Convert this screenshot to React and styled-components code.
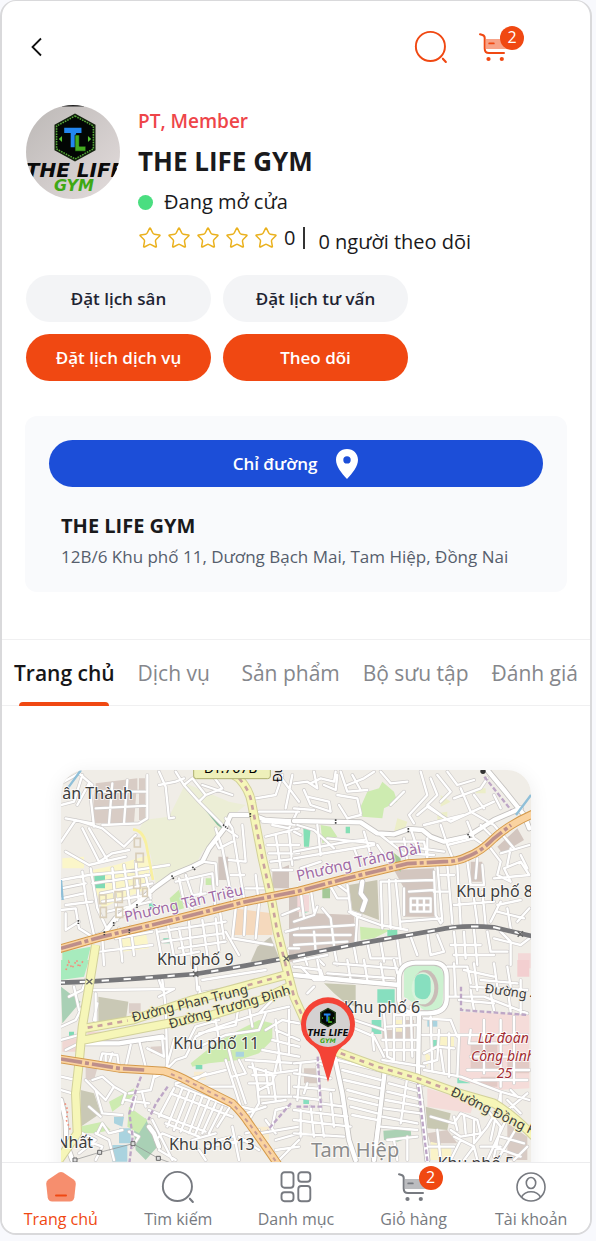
import { useState } from "react";
import { Star } from "lucide-react";
import styled, { createGlobalStyle } from "styled-components";

const TABS = ["Trang chủ", "Dịch vụ", "Sản phẩm", "Bộ sưu tập", "Đánh giá"];

const orange = "#f04812";
const grey = "#777a80";

/* ---------- icons ---------- */

const SearchIcon = () => (
  <svg width="36" height="36" viewBox="0 0 24 24" fill="none" stroke="currentColor" strokeLinecap="round">
    <circle cx="11.6" cy="11.6" r="9.7" strokeWidth="1.3" />
    <path d="M19.9 19.8l2 2.2" strokeWidth="1.4" />
  </svg>
);

const CartIcon = () => (
  <svg width="36" height="36" viewBox="0 0 36 36" fill="none" stroke="currentColor" strokeLinecap="round">
    <path d="M9 10h21v10H9z" fill="currentColor" fillOpacity="0.5" stroke="none" />
    <path
      d="M3 5.2l2.5 .8Q7.700 6.700 7.700 9v10.500Q7.700 24 12 24h15"
      strokeWidth="2"
      strokeLinejoin="round"
    />
    <path d="M12.200 14.400h4.600" strokeWidth="1.800" />
    <circle cx="11.500" cy="30" r="2.100" fill="currentColor" stroke="none" />
    <circle cx="24.800" cy="30" r="2.100" fill="currentColor" stroke="none" />
  </svg>
);

const HomeIcon = () => (
  <svg width="36" height="36" viewBox="0 0 36 36">
    <path
      d="M15.800 3.600Q18 2.300 20.200 3.600L30.600 10.400Q33 12 32.800 14.800L31.300 28.500Q30.600 32.500 26.800 32.500H9.200Q5.400 32.500 4.700 28.500L3.200 14.800Q3 12 5.400 10.400Z"
      fill="#f68e6e"
    />
    <path d="M13 26.500h10" stroke={orange} strokeWidth="2" strokeLinecap="round" />
  </svg>
);

const GridIcon = () => (
  <svg width="36" height="36" viewBox="0 0 36 36" fill="none" stroke="currentColor" strokeWidth="1.900">
    <rect x="3.500" y="3.300" width="12" height="15.500" rx="3" />
    <rect x="20.300" y="3.300" width="12" height="9.500" rx="3" />
    <rect x="3.500" y="23.300" width="12" height="9" rx="3" />
    <rect x="20.300" y="17" width="12" height="15.300" rx="3" />
  </svg>
);

const UserIcon = () => (
  <svg width="36" height="36" viewBox="0 0 36 36" fill="none" stroke="currentColor" strokeWidth="1.600">
    <circle cx="18" cy="18" r="14" />
    <ellipse cx="18" cy="14" rx="4.700" ry="5.500" />
    <path d="M8.500 28Q11.500 22.700 18 22.700T27.500 28" />
  </svg>
);

const PinIcon = () => (
  <svg width="24" height="32" viewBox="0 0 24 32">
    <path
      d="M12 1C5.600 1 1 5.600 1 11.700C1 18.500 6.500 25 12 31C17.500 25 23 18.500 23 11.700C23 5.600 18.400 1 12 1ZM12 8.200a3.700 3.700 0 1 1 0 7.400a3.700 3.700 0 0 1 0-7.400Z"
      fill="#fff"
      fillRule="evenodd"
    />
  </svg>
);

const Emblem = () => (
  <g>
    <path d="M0-24L19-13V12L0 23L-19 12V-13Z" fill="#14220f" />
    <path d="M0-21.500L17-11.700V10.700L0 20.500L-17 10.700V-11.700Z" fill="#020604" stroke="#58ad39" strokeWidth="1.400" strokeDasharray="1.500 1" />
    <path d="M-10-10H6V-5H1V9H-4V-5H-10Z" fill="#2387f0" />
    <path d="M0-3H4V8H10V13H0Z" fill="#43ad20" stroke="#020604" strokeWidth=".6" />
    <path d="M-15 1L-12-2V4ZM15 1L12-2V4Z" fill="#58c535" />
  </g>
);

const GymLogo = () => (
  <LogoSvg viewBox="0 0 94 94" role="img" aria-label="THE LIFE GYM">
    <defs>
      <linearGradient id="wall" x1="0" y1="0" x2="1" y2="1">
        <stop offset="0" stopColor="#bcb8b6" />
        <stop offset="1" stopColor="#e3dcdc" />
      </linearGradient>
    </defs>
    <rect width="94" height="94" fill="url(#wall)" />
    <path d="M36 0h22v1.500H36z" fill="#222" />
    <g transform="translate(49 33) scale(1.080 1.020)">
      <Emblem />
    </g>
    <LogoText x="49" y="72" fontSize="20" fill="#0a0a0a">
      THE LIFE
    </LogoText>
    <LogoText x="48" y="86" fontSize="16" fill="#3fa814">
      GYM
    </LogoText>
  </LogoSvg>
);

/* ---------- map ---------- */

// Four tiles, each with its own origin: building blocks, then streets.
const TILES = [
  {
    x: -6,
    y: -15,
    areas: [
      ["#eceed6", "M255 165L330 155L380 55L510 110L560 120L530 145L500 190L430 260L405 310L345 325L290 355L275 270L240 195Z"],
      ["#d8ccc5", "M110 55L235 40V75H110ZM105 85L232 80L225 175H100ZM240 40H258V165H240Z"],
      ["#fbf6c9", "M10 280L75 275V310H10ZM100 315L170 300L270 270V370L170 410L130 430L100 350ZM180 510L260 500L270 550L190 560Z"],
      ["#7fdab5", "M106 333L138 330V370H106ZM313 520H333V535H313ZM270 415H285V435H270Z"],
      ["#c9e9ac", "M332 400L360 374L375 430L340 440ZM440 340H458V360H440Z"],
      ["#85bd9c", "M436 132L480 170L495 195L475 180Z"],
      ["#c8c5b6", "M575 590L595 545L635 515L665 590Z"],
      ["#d0c4be", "M478 275H508V345H478ZM690 370H720V590H690ZM640 320L690 300V370H640Z"],
      ["#f5d9bd", "M525 430L640 445V510H525Z"],
      ["#a7ebbd", "M10 560L95 545L80 605H10Z"],
    ],
    streets:
      "M6 55L60 25L100 60M6 120L45 110L70 30M20 160L100 175M55 120L90 55L105 185M6 230L50 165L130 190L195 245L230 210M70 190L120 290L160 265L210 255M20 260L90 300L200 275M90 190L145 285M110 80H260M110 130L265 122M160 55L150 175M205 45L195 175M265 30V160L240 175L130 180M300 20L320 65L330 160L345 158M350 20L375 60L420 110L500 190L535 215M375 60L400 40L440 90L420 110M440 90L490 70L460 30M430 60L520 90M300 60L350 50L375 40" +
      "M6 345L90 330L200 320L330 300M6 370L80 355M6 400L75 385M20 420L100 410M70 320L80 400L105 510M95 310L115 430L150 505M6 435L50 430L60 490L100 515L140 500M20 445V495L60 470M100 355L270 330M125 385L280 355M130 410L275 390M145 440L275 410M160 310L175 465M195 300L215 440M230 290L240 420M260 330L275 400" +
      "M360 340L375 410L400 430M380 330L400 390L440 385M350 350L460 325L470 440M430 340L420 420M470 190L490 250L520 410M500 160L520 190L555 400M550 180L560 290M430 290L470 295L475 360M560 290L510 285M520 230L480 250L470 230M555 330H515M590 330L600 420M560 370H620M480 420L495 520M620 215L720 190M625 240H720M630 265H720M635 290L720 280M640 315H700M650 210L665 310M690 200L700 300M590 100L650 90L670 30M600 140H720M610 170L720 180M640 180L690 190L720 130M660 30L720 110M700 30L680 130" +
      "M290 480L310 590M325 470L345 575L420 560M360 490L375 570M390 470L400 600M430 465L445 570M470 460L480 560M300 500L500 470M310 530L490 505M360 550L500 530M180 490L190 590M215 485L225 570M170 520L280 500M130 520L135 600M120 560L280 540M500 500L540 570M530 430L520 520L640 540M560 420L555 510M600 415L590 520M670 450L720 430M680 500L720 490M690 550H720",
    avenues:
      "M135 505L170 460L240 410L285 370L340 330L400 305L430 290L450 250L500 185L515 150L580 150L620 165L720 170",
  },
  {
    x: 699,
    y: -15,
    areas: [
      ["#cdebb0", "M200 125L220 80L255 70L265 50L300 80L310 110L270 130L265 160L205 155ZM80 180L110 185L130 215L85 235ZM198 485L290 495L240 520L200 525Z"],
      ["#eceec8", "M430 145L460 140V165H430ZM310 160L340 170L330 200H300ZM440 90L470 110L440 125ZM545 70H575V85H545Z"],
      ["#84dfb5", "M28 190H50L45 245H30ZM155 185H168V205H155ZM30 420L45 440L28 445ZM280 495H310V513H280Z"],
      ["#c8c5b1", "M165 360L250 345L255 465L175 435Z"],
      ["#d3c6bf", "M60 445L180 450L185 530L0 570V460ZM300 315L420 310L420 455H330V370ZM530 290H565V350H530ZM610 245L670 190L690 225L625 265Z"],
      ["#a4c897", "M295 260L320 280V320L295 300ZM85 370H108V400H85Z"],
      ["#f3d8d8", "M672 565H710V610H672ZM10 390H45V440H10Z"],
    ],
    streets:
      "M0 55L40 50L70 70L60 20M50 55L80 40L120 50L125 20M30 75L50 120L110 140L105 110L40 95M90 60L125 75L130 30M140 20L160 80L220 75M160 60L210 40L240 20M130 90L190 100L200 145M135 120L160 160L200 150M175 30L200 75M260 20L290 55L340 50M330 80L290 120M380 20L400 90L345 150L360 175M410 40L430 90L400 120L440 150M430 30L470 80L440 110M460 20L490 60L540 45M480 100L560 70L580 40M370 150L400 125L470 170L600 110M390 180L510 150M500 70L530 140L600 180M540 90L570 130M560 180L590 210M600 90L620 130" +
      "M0 130L60 135M0 200L20 210M10 180L60 195L120 250M70 180L80 270M0 260L160 230L210 225M0 280L150 255L240 240M20 310L80 290M100 220L240 235M210 200L230 270M260 210L330 265L420 270M290 230H390L400 280M250 240L290 300M180 250L200 300M330 220L340 290M380 250L450 260M460 240L480 290M350 190L370 250M400 220V280M440 180L460 240L540 220M520 170L540 220L570 240" +
      "M430 300L445 470M460 300L475 475M490 300L500 480M520 290L530 360H570L565 300M550 280L545 340M420 380H460M440 330H480M480 420L600 410M540 400L550 475M565 380L575 480M590 250L620 290L610 330L650 350L630 310L680 290L706 330M620 265L706 240M640 300L650 250M680 270L700 310M600 340L706 330M600 180L660 250M610 420L680 405M610 440L690 460M590 470L620 410M640 430L650 490M670 470L706 430" +
      "M260 350L265 490M285 345L290 490M305 345L320 490M330 370V450M350 400H410V440H350ZM370 400V440M390 400V440M350 420H410M420 320L425 450L440 475M260 350L420 345M345 380L420 375M320 470L440 460M190 455L260 480L340 495M190 455L185 530M165 440L190 455M160 360L170 440L200 450M0 470L60 450L70 425M20 490L180 480M85 430L110 460L120 540M60 500L65 560M0 510L170 510M0 540L160 530M20 380L30 460M50 370L60 440M110 365L130 400H160M120 350L160 380" +
      "M0 590L100 570M30 570L40 600M70 580L90 600M120 550L130 600M180 545L190 600M220 535L230 580H310M260 530L270 590M310 525L320 600M350 515L370 570M400 505L410 570L450 560L430 510M480 500L490 600M510 500L515 580M540 495L550 600M580 500L590 560H640M620 500L650 530V600M470 540H560M480 570H600M600 520L680 540L706 520",
    avenues:
      "M0 168L200 172L250 205L300 208L345 192L385 195L410 215L450 230L520 215L600 165L680 130M580 15L630 75L690 150L706 190M205 350L200 385L215 405L205 435",
  },
  {
    x: -6,
    y: 570,
    areas: [
      ["#a7ebbd", "M6 0L90 0L75 50L6 60Z"],
      ["#a9d0b5", "M6 80L65 125L10 190ZM260 475L295 560L260 600L230 570L225 510Z"],
      ["#c9c8b5", "M118 110L208 125L200 185H118ZM65 390L105 400L125 460L65 500Z"],
      ["#cdebb0", "M395 310L470 250L540 210L600 180L640 190L640 240L600 280L540 300L450 310L400 320ZM210 440L265 480L240 520L205 500ZM150 425L225 385L220 410L160 455ZM60 500L130 485L155 510L110 520H60Z"],
      ["#aad3df", "M180 505H215V550H180ZM165 470H195L190 500L165 490ZM160 555H205V605H160ZM530 275H555V290H530Z"],
      ["#dccfc9", "M275 260L315 258V280H275ZM80 320L115 325L105 360H80ZM210 130H245V160H210Z"],
      ["#f8ecd0", "M405 335H440V360H405ZM585 500H630V540H585Z"],
      ["#7fdab5", "M30 215H45V235H30ZM410 315H430V328H410Z"],
      ["#f0d7d3", "M10 235H60V275H10ZM85 215H145V228H85Z"],
    ],
    streets:
      "M100 90L345 87L300 110M110 100V190M115 130L105 180M6 200L50 180L70 140M30 110L70 90L80 60M6 240L60 225M20 270L60 250M45 80L60 150M215 255L200 320M240 240L260 320M265 240L320 235M265 265L315 290L310 240M310 60L320 140L325 320M345 240L320 330L350 300M120 320L130 280L175 285L180 320M140 320V285M150 310L160 280M100 360L130 350L165 380L140 420L110 390L80 360M165 380L200 400L190 430M110 390L130 460L190 465M125 470L90 440M210 400L275 390L290 330M230 410L220 450M200 420L270 430M250 400L260 440M290 350L310 340M310 90L300 60" +
      "M350 300L380 290L410 230L450 210L600 160L690 140M390 240L410 200L480 180M420 220L530 195L540 130M420 260L500 225L600 210L620 160M470 180L480 240M570 140L580 200M600 160L650 110L690 100M620 210L670 180L720 190M650 210L720 240M640 240L720 260M610 270L720 290M560 300L720 310M570 320L640 340L720 330M580 345H650M570 370H640M600 390L640 370L660 280M580 310L600 390M620 330L630 400M650 180L665 330M690 150V280M420 80L425 110M410 20L415 90M430 60L620 30M420 100L600 70" +
      "M350 375L540 450M335 400L520 470M345 385L300 470M370 385L325 500M390 395L345 510M410 400L365 515M430 410L390 520M450 420L410 520M470 430L430 520M490 440L450 520M510 445L475 500M300 465L440 515M320 490L420 530M270 450L370 490M280 480L320 560L340 600M350 370L420 350L500 330M390 370L440 340M420 380H520M500 300L545 440L590 450M520 310L560 430M540 300L560 340L520 350M510 270L525 330M590 330L600 430L570 480M600 410H720M610 430L680 420M640 340L650 420M690 350V400M560 460L620 440M600 520L720 500M640 500L650 450L690 440M650 540L720 520M560 520L600 510M540 530L600 570M620 480L650 520" +
      "M6 350L50 360M6 390L40 400M115 520L130 490L150 520L190 510M110 520L150 540L165 600M90 545L130 560L110 600M70 520L110 540L60 580M210 515L240 530L220 560M290 540L310 520L360 540M400 540L470 520M520 500L540 600M480 540L520 530M300 570L350 600M420 570L440 600M440 560L560 540M650 570L720 560M660 600L720 540",
    avenues: "M75 250H180L310 230M6 420L20 480L22 550L40 600M270 500L285 520L300 560",
  },
  {
    x: 699,
    y: 570,
    areas: [
      ["#c8c8b2", "M90 70L185 75L185 140L150 125L120 100ZM395 440L470 460L460 510L400 505Z"],
      ["#ccf1d0", "M330 30Q350 10 400 15Q445 10 450 50L445 140Q430 155 390 150L330 110Z"],
      ["#c9bcb7", "M355 85A39 55 0 0 1 433 85A39 55 0 0 1 355 85Z"],
      ["#d9f3dc", "M353 85A34 48 0 0 1 421 85A34 48 0 0 1 353 85Z"],
      ["#87dfbf", "M362 60Q365 40 385 42Q410 42 410 65V95Q405 118 385 118Q362 115 362 95ZM250 88H302V128H250ZM233 180H262V222H233ZM415 240H430V270H415ZM490 325H528V370H490ZM28 415H45V432H28Z"],
      ["#f5dcd9", "M498 155L706 165V385L610 390L495 360ZM400 385L500 415L540 430L530 460L400 440Z"],
      ["#e2cac5", "M530 250H610V285H530ZM530 300H620V330H530ZM640 300H706V340H640ZM560 350H610V380H560Z"],
      ["#d8cbc4", "M265 210H330V240H265ZM335 180H360V240H335ZM30 325H70V370H30ZM400 520L460 510L490 550H410ZM640 490L700 530V600H640Z"],
      ["#faf3c8", "M300 180H325V215H300ZM435 225H480V260H435ZM390 270L410 290L400 320ZM410 545L470 560L475 600H410Z"],
      ["#abd1b4", "M268 512L350 507L352 530L310 545L270 540Z"],
      ["#aad3df", "M400 180H430V200H400Z"],
      ["#f3cfd0", "M670 0H706V50H670Z"],
    ],
    streets:
      "M0 20L80 30L90 60M70 0L80 55M120 10L310 25M160 0L170 60M210 0L220 60M260 10L270 70M300 0L310 40M100 40L300 55M460 20H520L530 70M480 10L485 110M510 30L600 50M540 10L550 90M600 10L610 80M640 20L650 80M560 60L670 70M530 80L700 90M465 110H570L700 160M495 120L600 130M530 90L540 150M590 100L600 150M640 80L650 155M680 60V160M20 20L60 60L90 60M40 100L60 80" +
      "M170 200L240 230L270 290M180 180L270 210M235 220L240 270M270 160L280 290L300 300M300 160V300M330 160V300M265 240H370M270 270H370M280 200L370 195M300 165H370M350 140L355 290M385 225L700 225M390 175L470 180L490 230M410 170L415 330M435 210L430 300L390 310M390 280L430 260L480 265M440 270L450 340M465 220V350M495 230L490 350M390 330L500 350L620 395L706 420M530 210L525 250H640M530 290H700M570 180V340M620 180V380M660 170V370M520 330H706M540 360H700" +
      "M130 300L270 335M145 330L260 360M150 360L260 385M160 390L255 415M165 415L250 435M170 440L250 460M175 465L250 480M100 300L0 310M110 320L70 310M0 340L110 355M0 380L120 390M20 310L10 420M70 320L80 450M40 370L30 400M0 410L80 420M80 430L150 440M0 450L160 470M0 480L170 500M20 450V530M50 440L60 530M80 460L90 530M110 400L120 500M0 520L150 530M280 340L390 375M285 370L380 395M280 395L385 420M275 420L385 440M270 445L380 460M265 470L370 490M340 350L320 490M265 300L390 320M260 500L370 510M250 500L240 600M280 540L370 530M300 540L310 600M340 530V600" +
      "M410 470L480 490L500 460L550 480L560 520L500 530L470 510M480 470L490 510M510 465L515 520M540 480L540 550L580 500L620 430M480 530L540 560L550 600M580 450L620 500L600 590M560 430L640 450L700 400M620 400L590 540M640 420L680 460M640 470L580 600M670 500L610 600M700 560L660 600M500 540L470 600M400 560H480M430 510L440 600M620 400V430M650 390L670 410M510 600L540 560M560 560H620M620 530L690 550M600 560L680 590",
    avenues:
      "M0 45L150 60L315 75M315 110V50Q320 10 365 8H420Q458 10 458 50V120Q455 160 400 160H370Q315 160 315 110M375 160L372 350L385 460L400 600M120 280L145 400L165 540L185 600M272 335L255 480L240 600",
  },
];

const ORANGE_ROADS =
  "M-10 538L124 500L294 460L454 420L554 395L714 363L849 327L949 303L1039 281L1149 275Q1190 275 1219 260Q1260 245 1299 205Q1340 165 1420 130M-10 866L174 895L309 903Q350 915 394 940L514 1000Q545 1030 564 1060L614 1130L690 1240";
const YELLOW_ROADS =
  "M480 -10L534 25Q566 60 572 100L604 265L629 375L649 485L674 585L699 680L735 760L800 835L839 850L949 890L1069 925L1179 965L1299 1000Q1350 1030 1420 1100M104 525L84 650L64 770L54 880L44 970L49 1090L-6 1170M69 775L214 750L394 690L674 615M69 810L244 775L454 735L600 690L684 650";
const RAIL =
  "M-10 638L84 635L234 625L404 612L554 587L699 560L899 520L1129 480Q1200 464 1299 472L1420 500";

const MAP_LABELS = [
  { x: 4, y: 86, size: 48, text: "ân Thành" },
  { x: 288, y: 586, size: 48, text: "Khu phố 9" },
  { x: 1186, y: 382, size: 48, text: "Khu phố 8" },
  { x: 848, y: 730, size: 48, text: "Khu phố 6" },
  { x: 337, y: 838, size: 48, text: "Khu phố 11" },
  { x: 324, y: 1140, size: 48, text: "Khu phố 13" },
  { x: -14, y: 1134, size: 48, text: "Nhất" },
  { x: 750, y: 1162, size: 60, text: "Tam Hiệp", fill: "#8b8b8b" },
  { x: 1130, y: 1196, size: 48, text: "Khu phố 5" },
  { x: 1270, y: 668, size: 39, text: "Đường 4", rotate: 8, halo: "#f6f3ed" },
  { x: 1250, y: 820, size: 42, text: "Lữ đoàn", fill: "#a32d33", italic: true },
  { x: 1230, y: 873, size: 42, text: "Công binh", fill: "#a32d33", italic: true },
  { x: 1307, y: 924, size: 42, text: "25", fill: "#a32d33", italic: true },
  { x: 194, y: 456, size: 44, text: "Phường Tân Triều", fill: "#a06ba5", rotate: -13 },
  { x: 710, y: 334, size: 45, text: "Phường Trảng Dài", fill: "#a06ba5", rotate: -13 },
  { x: 216, y: 756, size: 40, text: "Đường Phan Trung", rotate: -14, halo: "#f5f3b8" },
  { x: 328, y: 776, size: 40, text: "Đường Trương Định", rotate: -16, halo: "#f5f3b8" },
  { x: 1166, y: 975, size: 40, text: "Đường Đồng Khởi", rotate: 26, halo: "#f5f3b8" },
];

const Road = ({ d, casing, fill, width }) => (
  <g fill="none" strokeLinejoin="round">
    <path d={d} stroke={casing} strokeWidth={width + 6} />
    <path d={d} stroke={fill} strokeWidth={width} />
  </g>
);

const CityMap = () => (
  <MapSvg viewBox="0 0 1410 1380" role="img" aria-label="Bản đồ">
    <rect width="1410" height="1380" fill="#f0ede7" />
    {TILES.map((t) => (
      <g key={`${t.x}${t.y}`} transform={`translate(${t.x} ${t.y})`}>
        {t.areas.map(([fill, d]) => (
          <path key={d} d={d} fill={fill} />
        ))}
      </g>
    ))}
    {TILES.map((t) => (
      <g
        key={`${t.x}${t.y}`}
        transform={`translate(${t.x} ${t.y})`}
        fill="none"
        strokeLinejoin="round"
        strokeLinecap="round"
      >
        <path d={t.streets} stroke="#cfcccb" strokeWidth="11" />
        <path d={t.avenues} stroke="#c3c0be" strokeWidth="18" />
        <path d={t.streets} stroke="#fff" strokeWidth="7" />
        <path d={t.avenues} stroke="#fff" strokeWidth="13" />
      </g>
    ))}

    {/* small houses and hedges west of the park */}
    <g fill="none" stroke="#d9ceb9" strokeWidth="5">
      <path d="M115 375h20v26h-20zM162 365h22v32h-22zM218 325h20v30h-20zM118 412h18v30h-18zM165 412h20v30h-20zM220 205v26h18v-26zM225 250h22v26h-22zM245 355h14v24h-14z" />
    </g>
    <path d="M216 178Q245 180 255 220L276 330" fill="none" stroke="#f8f0a0" strokeWidth="8" />
    <path d="M15 600l8-25 10 20 14-25 6 22 14-20M12 1000l8 20-4 30 12 30" fill="none" stroke="#f0917e" strokeWidth="5" strokeDasharray="5 8" />
    <path d="M20 55L60 0M0 330L5 390M1365 135L1410 75" fill="none" stroke="#8fbfd8" strokeWidth="7" />
    <path
      d="M240 920L225 960L205 1030L215 1100L205 1180M1270 20L1350 120M1070 930L1085 1060L1100 1180M770 860L780 1010H700M320 950L285 1000L262 1050M1200 650V720L1400 735M690 1000L620 1080"
      fill="none"
      stroke="#bda6c6"
      strokeWidth="7"
      strokeDasharray="14 7"
    />
    <path d="M40 1170L116 1147L216 1121L292 1165L360 1190" fill="none" stroke="#8d8d8d" strokeWidth="2" />
    <path d="M110 1141h12v12h-12zM210 1115h12v12h-12zM286 1159h12v12h-12zM36 1164h12v12h-12z" fill="#ddd" stroke="#666" strokeWidth="3" />

    <path d={RAIL} fill="none" stroke="#77777a" strokeWidth="14" />
    <path d={RAIL} fill="none" stroke="#fff" strokeWidth="6" strokeDasharray="22 44" />
    <Road d={YELLOW_ROADS} casing="#d2d19a" fill="#f6f6b8" width={22} />
    <path
      d="M534 25Q566 60 572 100L604 265L629 375L649 485L674 585L699 680L729 750M839 850L949 890L1069 925L1160 958M80 773L200 752M560 646L674 615"
      fill="none"
      stroke="#c9a2a0"
      strokeWidth="8"
      strokeDasharray="15 15"
    />
    <Road d={ORANGE_ROADS} casing="#d49a4c" fill="#fad3a0" width={20} />
    <path d="M0 535L124 500L294 460L454 420L554 395L714 363L849 327L949 303L1039 281L1149 275Q1190 275 1219 260Q1260 245 1299 205L1350 165M0 867L174 895L250 900" fill="none" stroke="#bd8f8b" strokeWidth="11" strokeDasharray="64 9 12 9" />
    <path d="M330 912L394 940L514 1000L564 1060L614 1130L690 1240" fill="none" stroke="#c79b93" strokeWidth="6" strokeDasharray="12 12" />
    <path d="M568 129v12M486 164l14 12M332 316l6 12M394 290l10 12M228 402v12M158 456v12M824 148v14M1042 174v14M1220 192l8 12M130 484v12M205 478v12M52 450v12" stroke="#444" strokeWidth="5" strokeDasharray="5 3" />
    <path d="M76 627l18 16m0-16l-18 16M396 604l16 16m0-16l-16 16M668 558l16 16m0-16l-16 16M1370 484l16 16m0-16l-16 16" stroke="#666" strokeWidth="4" />

    <rect x="398" y="-30" width="230" height="56" rx="8" fill="#eef0ba" stroke="#aeb070" strokeWidth="3" />
    <MapText x="428" y="10" fontSize="42">
      ĐT.767B
    </MapText>
    <MapText fontSize="36" transform="translate(662 36) rotate(-90)">
      Đường
    </MapText>
    <circle cx="1266" cy="4" r="8" fill="#333" />

    {MAP_LABELS.map(({ x, y, size, text, fill = "#3d3d3d", rotate = 0, halo = "#fff", italic }) => (
      <MapText
        key={text}
        transform={`translate(${x} ${y}) rotate(${rotate})`}
        fontSize={size}
        fill={fill}
        stroke={halo}
        $italic={italic}
      >
        {text}
      </MapText>
    ))}

    {/* pin of the gym */}
    <path d="M801 936L776 852Q769 835 748 822Q720 800 720 763A81 81 0 0 1 882 763Q882 800 854 822Q833 835 826 852Z" fill="#f44336" />
    <circle cx="801" cy="765" r="66" fill="#d4d1d1" />
    <g transform="translate(801 743) scale(1.250)">
      <Emblem />
    </g>
    <LogoText x="801" y="799" fontSize="25" fill="#0a0a0a">
      THE LIFE
    </LogoText>
    <LogoText x="801" y="818" fontSize="19" fill="#3fa814">
      GYM
    </LogoText>
  </MapSvg>
);

/* ---------- page ---------- */

const NAV = [
  { label: "Trang chủ", icon: <HomeIcon /> },
  { label: "Tìm kiếm", icon: <SearchIcon /> },
  { label: "Danh mục", icon: <GridIcon /> },
  { label: "Giỏ hàng", icon: <CartIcon />, badge: 2 },
  { label: "Tài khoản", icon: <UserIcon /> },
];

const App = () => {
  const [tab, setTab] = useState(TABS[0]);

  return (
    <>
      <GlobalStyle />
      <Shell>
        <Content>
          <TopBar>
            <IconButton aria-label="Quay lại">
              <svg width="24" height="24" viewBox="0 0 24 24" fill="none" stroke="#111" strokeWidth="1.800">
                <path d="M17 3.500L8.500 12L17 20.500" />
              </svg>
            </IconButton>
            <TopActions>
              <IconButton aria-label="Tìm kiếm" $accent>
                <SearchIcon />
              </IconButton>
              <IconButton aria-label="Giỏ hàng" $accent>
                <CartIcon />
                <Badge>2</Badge>
              </IconButton>
            </TopActions>
          </TopBar>

          <Profile>
            <Avatar>
              <GymLogo />
            </Avatar>
            <Info>
              <Kind>PT, Member</Kind>
              <Name>THE LIFE GYM</Name>
              <Status>
                <Dot /> Đang mở cửa
              </Status>
              <Rating>
                <Stars>
                  {[1, 2, 3, 4, 5].map((n) => (
                    <Star key={n} size={24} strokeWidth={1.5} color="#eab11e" />
                  ))}
                </Stars>
                <Score>0</Score>
                <Followers>0 người theo dõi</Followers>
              </Rating>
            </Info>
          </Profile>

          <Actions>
            <Pill>Đặt lịch sân</Pill>
            <Pill>Đặt lịch tư vấn</Pill>
            <Pill $color={orange}>Đặt lịch dịch vụ</Pill>
            <Pill $color={orange}>Theo dõi</Pill>
          </Actions>

          <AddressCard>
            <Pill $color="#1c4ed8">
              Chỉ đường
              <PinIcon />
            </Pill>
            <AddressText>
              <h2>THE LIFE GYM</h2>
              <p>12B/6 Khu phố 11, Dương Bạch Mai, Tam Hiệp, Đồng Nai</p>
            </AddressText>
          </AddressCard>

          <Tabs role="tablist">
            {TABS.map((name) => (
              <Tab key={name} role="tab" aria-selected={name === tab} $active={name === tab} onClick={() => setTab(name)}>
                {name}
              </Tab>
            ))}
          </Tabs>

          <MapFrame>
            <CityMap />
          </MapFrame>
        </Content>

        <BottomNav>
          {NAV.map(({ label, icon, badge }, i) => (
            <NavLink key={label} href="#" $active={i === 0}>
              <NavIcon>
                {icon}
                {badge && <Badge>{badge}</Badge>}
              </NavIcon>
              {label}
            </NavLink>
          ))}
        </BottomNav>
      </Shell>
    </>
  );
};

const GlobalStyle = createGlobalStyle`
  * {
    box-sizing: border-box;
  }

  body {
    margin: 0;
    background: #f8f9fd;
    color: #1a1a1c;
    font-family: "Open Sans", "Noto Sans", sans-serif;
  }

  button {
    font-family: inherit;
    border: none;
    cursor: pointer;
  }

  h1, h2, p {
    margin: 0;
  }
`;

const Shell = styled.div`
  display: flex;
  flex-direction: column;
  height: calc(100vh - 6px);
  margin: 0 4px 0 0;
  background: #fff;
  border: 2px solid #d9d9db;
  border-top-width: 1px;
  border-radius: 16px;
  overflow: hidden;
`;

const Content = styled.main`
  flex: 1;
  min-height: 0;
  overflow: hidden;
`;

const TopBar = styled.header`
  display: flex;
  justify-content: space-between;
  align-items: center;
  height: 92px;
  padding: 0 77px 0 22px;
`;

const TopActions = styled.div`
  display: flex;
  gap: 28px;
`;

const IconButton = styled.button`
  position: relative;
  display: flex;
  padding: 0;
  background: none;
  color: ${({ $accent }) => ($accent ? orange : "#111")};
`;

const Badge = styled.span`
  position: absolute;
  top: -3px;
  right: -11px;
  width: 24px;
  height: 24px;
  border-radius: 50%;
  background: ${orange};
  color: #fff;
  font-size: 16px;
  line-height: 22px;
  text-align: center;
`;

const Profile = styled.section`
  display: flex;
  gap: 18px;
  padding: 12px 24px 0;
`;

const Avatar = styled.div`
  flex: none;
  width: 94px;
  height: 94px;
  border-radius: 50%;
  overflow: hidden;
`;

const LogoSvg = styled.svg`
  display: block;
  width: 100%;
`;

const LogoText = styled.text`
  font-family: "DejaVu Sans", sans-serif;
  font-weight: 700;
  font-style: italic;
  text-anchor: middle;
`;

const Info = styled.div`
  min-width: 0;
`;

const Kind = styled.p`
  color: #ee4549;
  font-size: 19px;
  font-weight: 600;
  line-height: 32px;
`;

const Name = styled.h1`
  font-size: 26px;
  font-weight: 700;
  line-height: 48px;
`;

const Status = styled.p`
  display: flex;
  align-items: center;
  gap: 11px;
  font-size: 20px;
  line-height: 34px;
`;

const Dot = styled.span`
  width: 15px;
  height: 15px;
  border-radius: 50%;
  background: #4ade80;
`;

const Rating = styled.div`
  display: flex;
  align-items: center;
  height: 38px;
  font-size: 20px;
`;

const Stars = styled.div`
  display: flex;
  gap: 5px;
`;

const Score = styled.span`
  margin-left: 6px;
  padding-right: 8px;
  border-right: 2px solid #333;
  line-height: 22px;
`;

const Followers = styled.span`
  padding: 6px 0 0 13px;
`;

const Actions = styled.div`
  display: grid;
  grid-template-columns: repeat(2, 185px);
  gap: 12px;
  padding: 18px 24px 0;
`;

const Pill = styled.button`
  display: flex;
  justify-content: center;
  align-items: center;
  gap: 18px;
  height: 47px;
  padding: 0 16px;
  border-radius: 24px;
  background: ${({ $color }) => $color || "#f3f4f6"};
  color: ${({ $color }) => ($color ? "#fff" : "#1f2433")};
  font-size: 17px;
  font-weight: 600;
  white-space: nowrap;
`;

const AddressCard = styled.section`
  margin: 35px 23px 47px;
  padding: 24px 24px 20px;
  border-radius: 12px;
  background: #f9fafc;

  ${Pill} {
    width: 100%;
  }
`;

const AddressText = styled.div`
  padding: 23px 12px 0;

  h2 {
    font-size: 20px;
    line-height: 32px;
  }

  p {
    color: #565e6c;
    font-size: 17px;
    line-height: 30px;
  }
`;

const Tabs = styled.nav`
  display: flex;
  justify-content: space-between;
  padding: 0 12px;
  border-top: 1px solid #f0f0f1;
  border-bottom: 1px solid #f0f0f1;
`;

const Tab = styled.button`
  position: relative;
  min-width: 81px;
  height: 65px;
  padding: 0;
  background: none;
  color: ${({ $active }) => ($active ? "#161618" : "#85878c")};
  font-size: 21px;
  font-weight: ${({ $active }) => ($active ? 600 : 400)};
  text-align: left;
  white-space: nowrap;

  &::after {
    content: "";
    position: absolute;
    left: 5px;
    right: 6px;
    bottom: -1px;
    height: 4px;
    border-radius: 4px 4px 0 0;
    background: ${({ $active }) => ($active ? orange : "transparent")};
  }
`;

const MapFrame = styled.section`
  margin: 64px 59px 0;
  border-radius: 24px;
  overflow: hidden;
  box-shadow: 0 4px 20px rgba(0, 0, 0, 0.08);
`;

const MapSvg = styled.svg`
  display: block;
  width: 100%;
`;

const MapText = styled.text`
  font-family: "Noto Sans", sans-serif;
  font-style: ${({ $italic }) => ($italic ? "italic" : "normal")};
  stroke-width: 6px;
  stroke-opacity: 0.7;
  paint-order: stroke;
`;

const BottomNav = styled.nav`
  display: grid;
  grid-template-columns: repeat(5, 1fr);
  padding: 6px 0 0;
  border-top: 1px solid #ececee;
  background: #fff;
`;

const NavLink = styled.a`
  display: flex;
  flex-direction: column;
  align-items: center;
  color: ${({ $active }) => ($active ? orange : grey)};
  font-size: 16px;
  line-height: 28px;
  text-decoration: none;
`;

const NavIcon = styled.span`
  position: relative;
  display: flex;
`;

export default App;
